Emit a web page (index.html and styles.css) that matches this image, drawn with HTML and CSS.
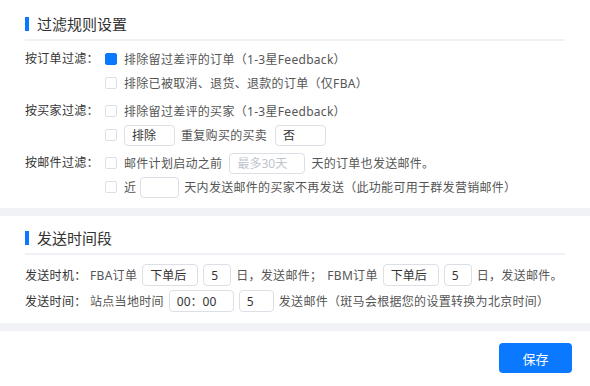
FILE: index.html
```html
<!DOCTYPE html>
<html lang="zh-CN">
<head>
  <meta charset="UTF-8" />
  <title>过滤规则设置</title>
  <link rel="stylesheet" href="styles.css">
</head>
<body>
  <section class="panel panel-first">
    <h2 class="panel-title">过滤规则设置</h2>

    <div class="group">
      <div class="group-label">按订单过滤：</div>
      <div class="group-body">
        <div class="line"><span class="check checked"></span>排除留过差评的订单（1-3星Feedback）</div>
        <div class="line"><span class="check"></span>排除已被取消、退货、退款的订单（仅FBA）</div>
      </div>
    </div>

    <div class="group">
      <div class="group-label">按买家过滤：</div>
      <div class="group-body">
        <div class="line"><span class="check"></span>排除留过差评的买家（1-3星Feedback）</div>
        <div class="line">
          <span class="check"></span>
          <input class="field w-51" value="排除">
          <span>重复购买的买卖</span>
          <input class="field w-51 ml-2" value="否">
        </div>
      </div>
    </div>

    <div class="group">
      <div class="group-label">按邮件过滤：</div>
      <div class="group-body">
        <div class="line">
          <span class="check"></span>
          <span>邮件计划启动之前</span>
          <input class="field w-76 ml-1" placeholder="最多30天">
          <span>天的订单也发送邮件。</span>
        </div>
        <div class="line">
          <span class="check"></span>
          <span>近</span>
          <input class="field w-39 ml-n2">
          <span class="ml-n1">天内发送邮件的买家不再发送（此功能可用于群发营销邮件）</span>
        </div>
      </div>
    </div>
  </section>

  <section class="panel">
    <h2 class="panel-title">发送时间段</h2>

    <div class="time-rows">
      <div class="time-row">
        <div class="time-label">发送时机：</div>
        <span>FBA订单</span>
        <input class="field w-56" value="下单后">
        <input class="field w-28" value="5">
        <span>日，发送邮件；</span>
        <span>FBM订单</span>
        <input class="field w-56" value="下单后">
        <input class="field w-28" value="5">
        <span>日，发送邮件。</span>
      </div>
      <div class="time-row">
        <div class="time-label">发送时间：</div>
        <span>站点当地时间</span>
        <input class="field w-65" value="00：00">
        <input class="field w-35" value="5">
        <span>发送邮件（斑马会根据您的设置转换为北京时间）</span>
      </div>
    </div>
  </section>

  <div class="footer">
    <button class="btn-save">保存</button>
  </div>
</body>
</html>
```

FILE: styles.css
```css
:root {
  --primary: #0a78ff;
  --text: #333333;
  --text-secondary: #555555;
  --border: #dcdfe6;
  --band: #f0f2f5;
}

* {
  margin: 0;
  padding: 0;
  box-sizing: border-box;
}

html, body {
  width: 590px;
  font-family: "Noto Sans", "Noto Sans CJK SC", sans-serif;
  font-size: 12px;
  letter-spacing: 0.3px;
  color: var(--text);
  background: #ffffff;
}

.panel {
  padding: 0 25px 9px;
  border-bottom: 8px solid var(--band);
}

.panel-first {
  padding-top: 2px;
}

.panel-title {
  display: flex;
  align-items: center;
  gap: 8px;
  padding: 12px 0 5px;
  line-height: 20px;
  font-size: 15px;
  font-weight: 400;
  letter-spacing: 0;
  color: var(--text);
  border-bottom: 2px solid #eef1f5;
}

.panel-title::before {
  content: "";
  width: 4px;
  height: 14px;
  background: var(--primary);
}

/* grupy filtrów */
.group {
  display: flex;
  margin-top: 4px;
}

.panel-first .group:first-of-type {
  margin-top: 6px;
}

.group-label {
  width: 80px;
  flex: none;
  line-height: 24px;
  color: var(--text);
}

.line {
  display: flex;
  align-items: center;
  gap: 6px;
  height: 24px;
  white-space: nowrap;
  color: var(--text-secondary);
}

.check {
  width: 12px;
  height: 12px;
  border: 1px solid var(--border);
  border-radius: 2px;
  background: #ffffff;
  flex: none;
  margin-right: 1px;
}

.check.checked {
  background: var(--primary);
  border-color: var(--primary);
}

.field {
  flex: none;
  height: 21px;
  padding: 0 7px;
  border: 1px solid var(--border);
  border-radius: 4px;
  font: inherit;
  color: var(--text);
  background: #ffffff;
  outline: none;
}

.field::placeholder {
  color: #c0c4cc;
}

.w-28 { width: 28px; }
.w-35 { width: 35px; }
.w-39 { width: 39px; }
.w-51 { width: 51px; }
.w-56 { width: 56px; }
.w-65 { width: 65px; }
.w-76 { width: 76px; }
.ml-1 { margin-left: 1px; }
.ml-2 { margin-left: 2px; }
.ml-n1 { margin-left: -1px; }
.ml-n2 { margin-left: -2px; }

/* czas wysyłki */
.time-rows {
  margin-top: 7px;
}

.time-row {
  display: flex;
  align-items: center;
  gap: 5px;
  height: 26px;
  white-space: nowrap;
  color: var(--text-secondary);
}

.time-row > * {
  flex: none;
}

.time-row .field {
  height: 22px;
}

.time-label {
  width: 60px;
  color: var(--text);
}

.footer {
  display: flex;
  justify-content: flex-end;
  padding: 12px 18px;
}

.btn-save {
  width: 73px;
  height: 30px;
  border: none;
  border-radius: 4px;
  background: var(--primary);
  color: #ffffff;
  font: inherit;
  font-size: 13px;
  cursor: pointer;
}
```
